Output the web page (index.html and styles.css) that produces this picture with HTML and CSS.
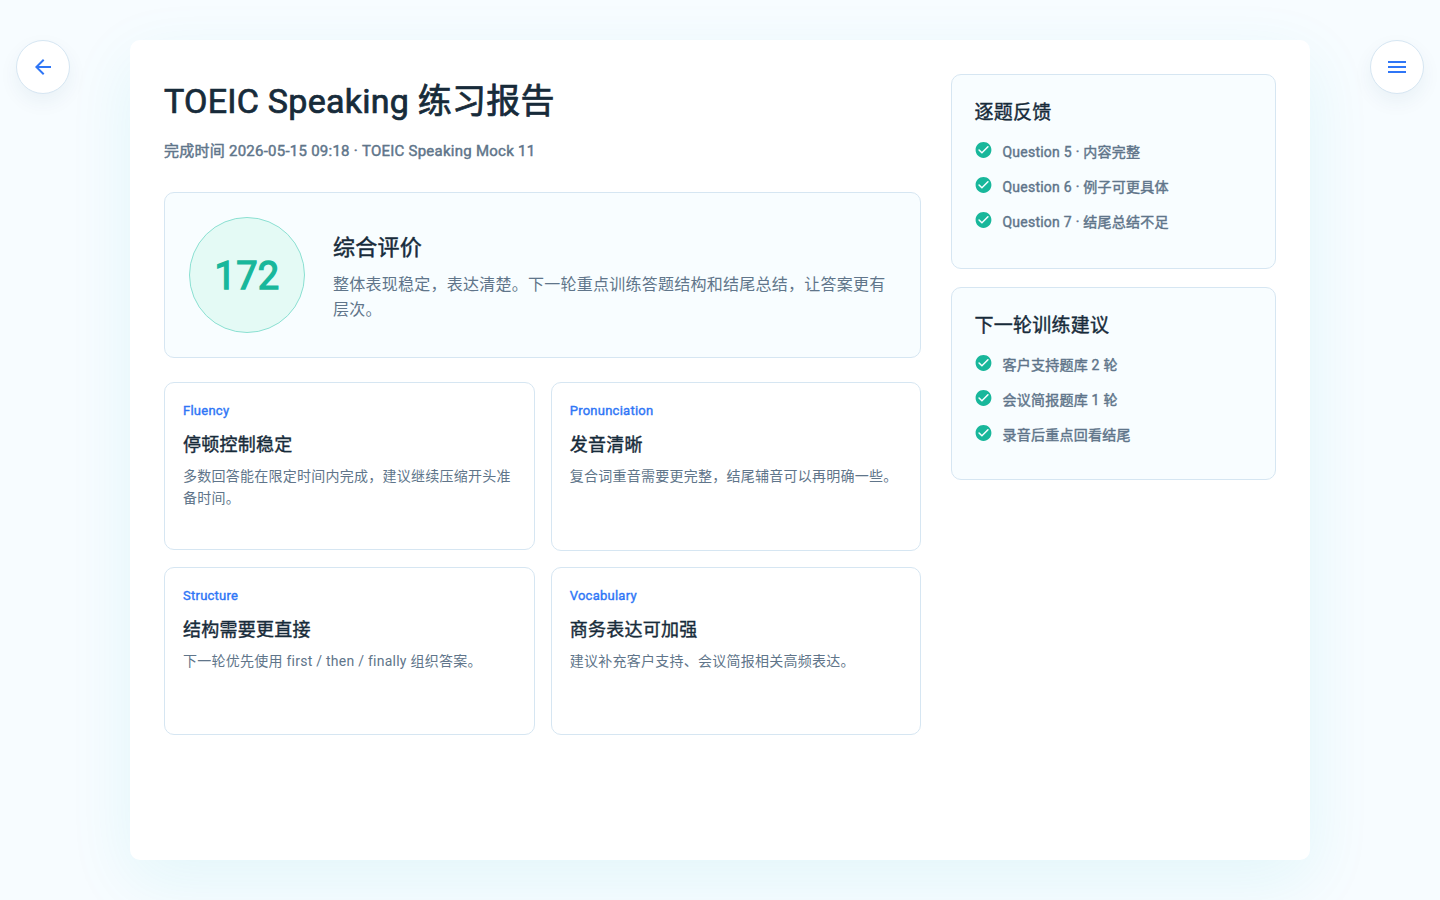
FILE: index.html
```html
<!DOCTYPE html>
<html lang="zh-CN">
<head>
  <meta charset="UTF-8" />
  <title>TOEIC Speaking 练习报告</title>
  <link rel="stylesheet" href="styles.css">
</head>
<body>
  <svg class="sprite" aria-hidden="true">
    <symbol id="check" viewBox="0 -0.6 24 24">
      <path d="M12 2C6.48 2 2 6.48 2 12s4.48 10 10 10 10-4.48 10-10S17.52 2 12 2zM9.29 16.29L5.7 12.7a.996.996 0 1 1 1.41-1.41L10 14.17l6.88-6.88a.996.996 0 1 1 1.41 1.41l-7.59 7.59c-.38.39-1.02.39-1.41 0z"/>
    </symbol>
  </svg>

  <div class="page">
    <button class="round-btn" aria-label="返回">
      <svg viewBox="0 0 24 24"><path d="M20 11H7.83l5.59-5.59L12 4l-8 8 8 8 1.41-1.41L7.83 13H20v-2z"/></svg>
    </button>

    <div class="panel">
      <main class="main">
        <h1>TOEIC Speaking 练习报告</h1>
        <p class="meta">完成时间 2026-05-15 09:18 · TOEIC Speaking Mock 11</p>

        <section class="summary">
          <div class="score">172</div>
          <div class="summary-text">
            <h2>综合评价</h2>
            <p>整体表现稳定，表达清楚。下一轮重点训练答题结构和结尾总结，让答案更有层次。</p>
          </div>
        </section>

        <section class="grid">
          <div class="card">
            <span class="label">Fluency</span>
            <h3>停顿控制稳定</h3>
            <p>多数回答能在限定时间内完成，建议继续压缩开头准备时间。</p>
          </div>
          <div class="card">
            <span class="label">Pronunciation</span>
            <h3>发音清晰</h3>
            <p>复合词重音需要更完整，结尾辅音可以再明确一些。</p>
          </div>
          <div class="card">
            <span class="label">Structure</span>
            <h3>结构需要更直接</h3>
            <p>下一轮优先使用 first / then / finally 组织答案。</p>
          </div>
          <div class="card">
            <span class="label">Vocabulary</span>
            <h3>商务表达可加强</h3>
            <p>建议补充客户支持、会议简报相关高频表达。</p>
          </div>
        </section>
      </main>

      <aside class="side">
        <section class="side-card feedback">
          <h3>逐题反馈</h3>
          <ul>
            <li><svg><use href="#check"/></svg>Question 5 · 内容完整</li>
            <li><svg><use href="#check"/></svg>Question 6 · 例子可更具体</li>
            <li><svg><use href="#check"/></svg>Question 7 · 结尾总结不足</li>
          </ul>
        </section>
        <section class="side-card">
          <h3>下一轮训练建议</h3>
          <ul>
            <li><svg><use href="#check"/></svg>客户支持题库 2 轮</li>
            <li><svg><use href="#check"/></svg>会议简报题库 1 轮</li>
            <li><svg><use href="#check"/></svg>录音后重点回看结尾</li>
          </ul>
        </section>
      </aside>
    </div>

    <button class="round-btn" aria-label="菜单">
      <svg viewBox="0 0 24 24"><path d="M3 18h18v-2H3v2zm0-5h18v-2H3v2zm0-7v2h18V6H3z"/></svg>
    </button>
  </div>
</body>
</html>
```
FILE: styles.css
```css
* {
  box-sizing: border-box;
  margin: 0;
  padding: 0;
}
body {
  font-family: Roboto, "Noto Sans CJK SC", sans-serif;
  letter-spacing: 0.25px;
  color: #172b3a;
  background: #f7fcff;
  overflow: hidden;
}
.sprite {
  display: none;
}
.page {
  height: 900px;
  padding: 40px 16px;
  display: flex;
  justify-content: space-between;
  align-items: flex-start;
}
.round-btn {
  width: 54px;
  height: 54px;
  display: flex;
  align-items: center;
  justify-content: center;
  background: #fff;
  border: 1px solid #d6e6f2;
  border-radius: 50%;
  box-shadow: 0 8px 20px rgba(23, 60, 100, 0.06);
  z-index: 1;
}
.round-btn svg {
  width: 24px;
  height: 24px;
  fill: #2f76f6;
}
.panel {
  width: 1180px;
  height: 820px;
  padding: 34px;
  display: grid;
  grid-template-columns: minmax(0, 7fr) minmax(0, 3fr);
  gap: 30px;
  background: #fff;
  border-radius: 10px;
  box-shadow: 0 20px 66px rgba(24, 190, 205, 0.09);
}
h1, h2, h3 {
  font-weight: 400;
}
/* regular outlines thickened a little, keeps the regular widths */
.meta, .label, .side-card li {
  -webkit-text-stroke: 0.03em currentColor;
}
h1, h2, h3, .score {
  -webkit-text-stroke: 0.022em currentColor;
}
h1 {
  font-size: 34px;
  line-height: 54px;
}
.meta {
  margin-top: 12px;
  font-size: 15px;
  line-height: 22px;
  color: #60758a;
}
.summary {
  margin-top: 30px;
  padding: 24px;
  display: flex;
  align-items: center;
  gap: 28px;
  background: #f8fdff;
  border: 1px solid #d6e6f2;
  border-radius: 10px;
}
.score {
  flex: none;
  width: 116px;
  height: 116px;
  padding-top: 2px;
  display: flex;
  align-items: center;
  justify-content: center;
  font-size: 38px;
  -webkit-text-stroke-width: 0.035em;
  color: #18b79b;
  background: #e4faf5;
  border: 1px solid #8be0d2;
  border-radius: 50%;
}
.summary-text h2 {
  margin-top: 3px;
  font-size: 22px;
  line-height: 32px;
}
.summary-text p {
  margin-top: 8px;
  font-size: 16px;
  line-height: 25px;
  color: #60758a;
}
.grid {
  margin-top: 24px;
  display: grid;
  grid-template-columns: 1fr 1fr;
  gap: 16px;
}
.card {
  aspect-ratio: 2.2;
  padding: 18px;
  border: 1px solid #d6e6f2;
  border-radius: 10px;
}
.label {
  display: block;
  font-size: 13px;
  line-height: 20px;
  color: #2f76f6;
}
.card h3 {
  margin-top: 11px;
  font-size: 18px;
  line-height: 26px;
}
.card p {
  margin-top: 7px;
  font-size: 14px;
  line-height: 22px;
  color: #60758a;
}
.side-card {
  height: 193px;
  padding: 24px 22px 22px;
  background: #f8fdff;
  border: 1px solid #d6e6f2;
  border-radius: 10px;
}
.side-card.feedback {
  height: 195px;
  margin-bottom: 18px;
}
.side-card h3 {
  font-size: 19px;
  line-height: 28px;
}
.side-card ul {
  margin-top: 13px;
  list-style: none;
}
.side-card li {
  display: flex;
  gap: 9px;
  margin-bottom: 13px;
  font-size: 14px;
  line-height: 24px;
  height: 22px;
  color: #60758a;
}
.side-card li svg {
  width: 19px;
  height: 19px;
  fill: #18b79b;
  stroke: none;
}
```
